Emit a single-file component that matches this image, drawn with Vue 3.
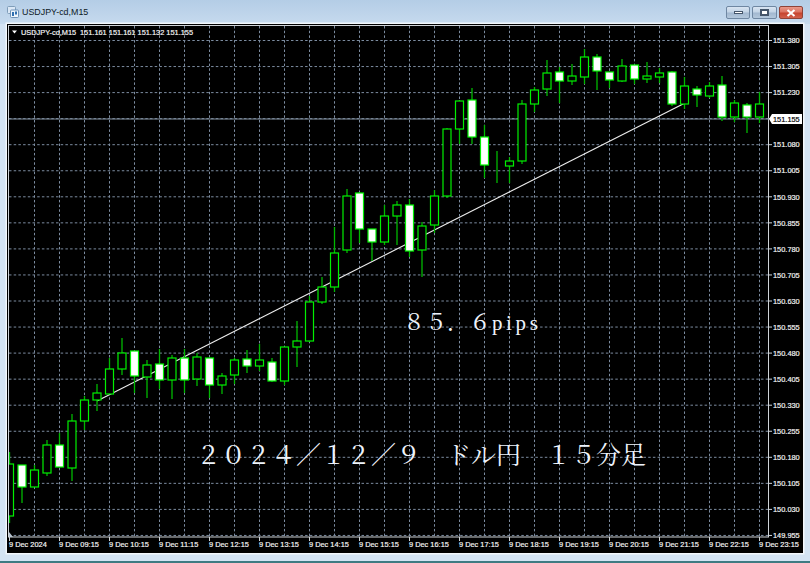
<script setup>
const raw = [
  [0,464,516,452,523],[1,465,487,465,503],[0,470,487,465,487],[0,445,473,440,476],[1,445,467,433,467],
  [0,421,468,414,481],[0,400,421,396,430],[0,393,400,384,411],[0,369,394,358,394],[0,353,369,338,375],
  [1,351,376,351,393],[0,365,377,360,398],[1,364,380,349,389],[0,358,380,355,399],[1,358,380,349,393],
  [0,357,379,353,386],[1,358,385,358,398],[0,376,385,373,394],[0,360,375,358,384],[1,359,366,350,373],
  [0,360,366,344,371],[1,362,381,358,382],[0,347,381,347,385],[0,341,347,321,367],[0,302,341,296,342],
  [0,287,302,277,304],[0,253,287,227,292],[0,196,250,189,253],[1,193,229,192,243],[1,229,242,229,261],
  [0,216,242,205,245],[0,205,216,201,245],[1,205,251,199,257],[0,226,250,222,277],[0,196,225,190,233],
  [0,129,196,128,198],[0,101,129,100,144],[1,100,137,88,144],[1,137,165,125,178],[0,164,164,151,183],
  [0,161,166,157,183],[0,104,161,100,164],[0,90,104,87,112],[0,73,89,60,96],[1,72,81,67,103],
  [0,76,81,64,85],[0,57,77,49,84],[1,57,71,54,90],[1,72,80,72,88],[0,66,81,59,82],
  [1,65,79,65,84],[0,76,79,62,83],[0,73,77,68,83],[1,72,104,71,106],[0,86,104,77,109],
  [1,89,95,86,107],[0,86,96,82,98],[1,85,117,76,121],[0,103,117,100,122],[1,105,117,103,133],
  [0,104,117,92,123]
]
const candles = raw.map((c, i) => ({
  x: 9.5 + 12.5 * i,
  bear: c[0] === 1,
  top: c[1],
  h: c[2] - c[1],
  wt: c[3],
  wb: c[4]
}))
const prices = ['151.380','151.305','151.230','151.155','151.080','151.005','150.930','150.855','150.780','150.705','150.630','150.555','150.480','150.405','150.330','150.255','150.180','150.105','150.030','149.955']
const yLines = prices.map((p, i) => ({ p, y: 40.5 + 26.05 * i }))
const xLines = Array.from({ length: 30 }, (_, i) => 34 + 25 * i + 0.5)
const hours = ['09','10','11','12','13','14','15','16','17','18','19','20','21','22','23']
const times = [{ x: 9, t: '9 Dec 2024' }, ...hours.map((h, i) => ({ x: 59 + 50 * i, t: `9 Dec ${h}:15` }))]
</script>

<template>
  <div class="window">
    <div class="titlebar">
      <svg class="appicon" viewBox="0 0 12 12" width="12" height="12">
        <rect x="0.5" y="0.5" width="8" height="7" rx="1" fill="#dbe8f6" stroke="#7f9db9"/>
        <rect x="3.5" y="4" width="8" height="7.5" rx="1" fill="#eef5fc" stroke="#6f93b8"/>
        <rect x="5" y="6" width="2" height="4" fill="#2f6fb0"/>
        <rect x="8" y="5.5" width="2" height="3" fill="#2f6fb0"/>
      </svg>
      <span class="title">USDJPY-cd,M15</span>
      <div class="buttons">
        <div class="btn"><i class="min"></i></div>
        <div class="btn wide"><i class="restore"></i></div>
        <div class="btn close">
          <svg viewBox="0 0 10 8" width="10" height="8"><path d="M1.5 1 L8.5 7 M8.5 1 L1.5 7" stroke="#fff" stroke-width="2"/></svg>
        </div>
      </div>
    </div>
    <div class="frame">
      <svg class="chart" viewBox="7 24 796 529" width="796" height="529">
        <defs>
          <clipPath id="plot"><rect x="9" y="25" width="760" height="512"/></clipPath>
        </defs>
        <rect x="7" y="24" width="796" height="529" fill="#000"/>

        <g class="grid">
          <line v-for="l in yLines" :key="l.p" x1="9" x2="769" :y1="l.y" :y2="l.y"/>
          <line v-for="x in xLines" :key="x" :x1="x" :x2="x" y1="26" y2="537"/>
        </g>
        <rect class="border" x="8.5" y="25.5" width="760" height="511.5"/>
        <path d="M9 537 h4 l-4 -5 z" fill="#b8c4d0"/>

        <g class="ticks">
          <line v-for="l in yLines" :key="l.p" x1="769" x2="772" :y1="l.y" :y2="l.y"/>
          <line v-for="t in times" :key="t.x" :x1="t.x + 0.5" :x2="t.x + 0.5" y1="537" y2="541"/>
        </g>

        <line class="priceline" x1="9" x2="769" y1="119" y2="119"/>
        <line class="trend" x1="97" y1="401" x2="684" y2="103.5"/>

        <g clip-path="url(#plot)">
          <g v-for="c in candles" :key="c.x">
            <line class="wick" :x1="c.x" :x2="c.x" :y1="c.wt" :y2="c.wb"/>
            <rect class="body" :class="{ bear: c.bear }" :x="c.x - 4" :y="c.top" width="8" :height="c.h"/>
          </g>
        </g>

        <text class="large mid" x="403" y="330">８５．６</text>
        <text class="large pips" x="492" y="330">pips</text>
        <text class="large" x="196" y="464">２０２４／１２／９　ドル円　１５分足</text>

        <path d="M12 30.5 h5 l-2.5 3 z" fill="#fff"/>
        <text class="label" x="21" y="34.5">USDJPY-cd,M15</text>
        <text class="label" x="80" y="34.5">151.161 151.161 151.132 151.155</text>

        <text v-for="l in yLines" :key="l.p" class="label" x="773" :y="l.y + 2.7">{{ l.p }}</text>
        <text v-for="t in times" :key="t.x" class="label" :x="t.x" y="547">{{ t.t }}</text>

        <path d="M769 119 l3 -5 h30 v10 h-30 z" fill="#fff"/>
        <text class="label current" x="773" y="121.7">151.155</text>
      </svg>
    </div>
    <div class="edge"></div>
  </div>
</template>

<style scoped>
.window {
  width: 810px;
  height: 563px;
  box-sizing: border-box;
  display: flex;
  flex-direction: column;
  background: #d3e3f3;
  overflow: hidden;
  font-family: "Liberation Sans", sans-serif;
}
.titlebar {
  height: 24px;
  flex: none;
  display: flex;
  align-items: center;
  padding: 0 7px;
  box-sizing: border-box;
  background: linear-gradient(#b4cde6, #c6daee);
}
.appicon {
  margin-right: 3px;
  flex: none;
}
.title {
  font-size: 8.9px;
  color: #0d1a26;
}
.buttons {
  margin-left: auto;
  display: flex;
  gap: 2px;
  align-self: flex-start;
  margin-top: 6px;
}
.btn {
  width: 24px;
  height: 13px;
  border: 1px solid #6f87a2;
  border-radius: 2px;
  box-sizing: border-box;
  background: linear-gradient(#d9e5f2 0%, #c3d4e6 45%, #a2b8d0 55%, #b4c8dc 100%);
  display: flex;
  align-items: center;
  justify-content: center;
}
.btn.wide {
  width: 25px;
}
.btn.close {
  border-color: #8f4338;
  background: linear-gradient(#e9998a 0%, #dc7462 45%, #c6442f 55%, #d2604c 100%);
}
.min {
  display: block;
  width: 9px;
  height: 3px;
  background: #fff;
  border: 1px solid #44556a;
  box-sizing: border-box;
}
.restore {
  display: block;
  width: 9px;
  height: 7px;
  background: #fff;
  border: 2px solid #44556a;
  box-sizing: border-box;
}
.frame {
  flex: none;
  padding: 0 7px;
  height: 529px;
}
.chart {
  display: block;
  box-shadow: 0 0 0 1.5px #f2f7fc;
}
.edge {
  flex: none;
  margin-top: 8px;
  height: 2px;
  background: #3f7a82;
}
.grid line {
  stroke: #7c8ca0;
  stroke-width: 1;
  stroke-dasharray: 2.5 2.2;
}
.border {
  fill: none;
  stroke: #d0d4d8;
  stroke-width: 1;
}
.ticks line {
  stroke: #d0d4d8;
  stroke-width: 1;
}
.priceline {
  stroke: #808e9e;
  stroke-width: 1;
}
.trend {
  stroke: #eeeeee;
  stroke-width: 1.1;
}
.wick {
  stroke: #00b800;
  stroke-width: 1.3;
}
.body {
  fill: #000;
  stroke: #00f000;
  stroke-width: 1.2;
}
.body.bear {
  fill: #fff;
}
.label {
  font-family: "Liberation Sans", sans-serif;
  font-size: 7.4px;
  fill: #f6f6f6;
  stroke: #f6f6f6;
  stroke-width: 0.18px;
}
.label.current {
  fill: #000;
  stroke: #000;
}
.large {
  font-family: "Liberation Serif", "Noto Serif CJK JP", "Noto Sans CJK JP", serif;
  font-size: 25px;
  fill: #eef3fb;
}
.mid {
  font-size: 22px;
}
.pips {
  font-size: 21px;
  letter-spacing: 3.6px;
}
</style>
